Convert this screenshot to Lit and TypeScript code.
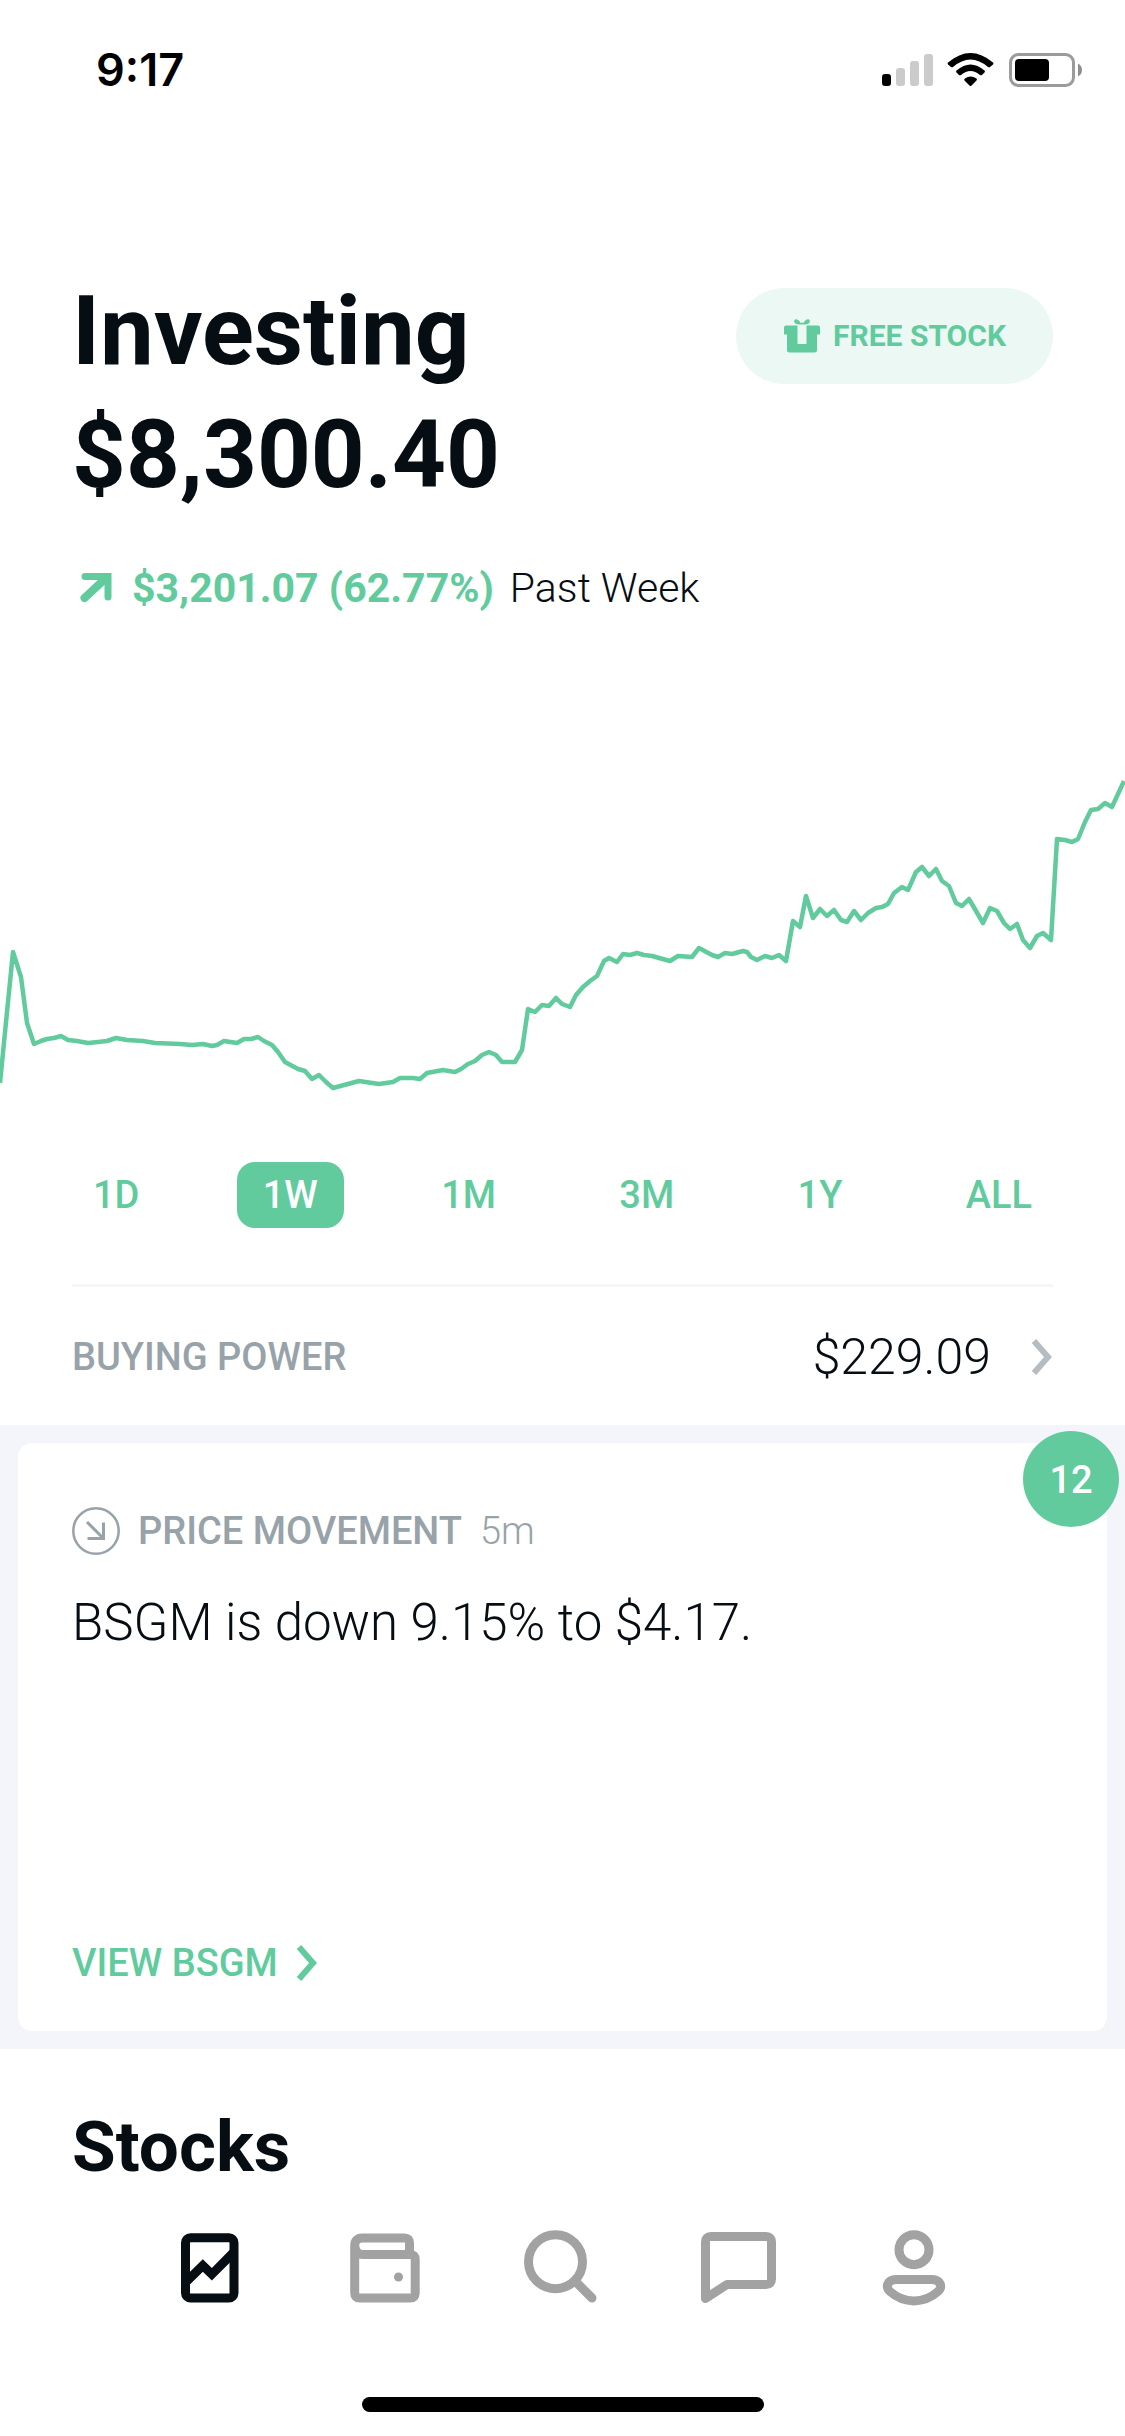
import { LitElement, html, css, svg } from "lit";
import { customElement, state } from "lit/decorators.js";
import { classMap } from "lit/directives/class-map.js";

const CHART_POINTS: [number, number][] = [
  [0, 1083], [7, 1012], [13, 952], [21, 977], [27, 1023], [34, 1044], [41, 1041], [47, 1039], [54, 1038], [61, 1036],
  [68, 1040], [77, 1041], [88, 1043], [98, 1042], [107, 1041], [116, 1038], [127, 1040], [143, 1041], [155, 1043],
  [180, 1044], [192, 1045], [203, 1044], [212, 1046], [217, 1045], [224, 1041], [237, 1043], [244, 1039], [251, 1039],
  [258, 1037], [264, 1041], [272, 1045], [278, 1052], [285, 1062], [298, 1069], [305, 1071], [312, 1079], [319, 1075],
  [326, 1082], [333, 1088], [359, 1081], [379, 1084], [393, 1082], [400, 1078], [413, 1078], [420, 1079], [427, 1073],
  [443, 1070], [455, 1072], [461, 1069], [468, 1064], [475, 1061], [482, 1055], [489, 1052], [496, 1055], [502, 1062],
  [515, 1062], [522, 1050], [528, 1009], [535, 1012], [542, 1005], [549, 1006], [556, 998], [562, 1004], [570, 1007],
  [576, 995], [583, 987], [590, 981], [597, 976], [604, 961], [609, 958], [617, 962], [623, 954], [630, 955],
  [637, 953], [644, 955], [652, 956], [670, 961], [678, 956], [692, 957], [699, 948], [712, 955], [718, 957],
  [725, 953], [732, 954], [743, 951], [747, 952], [751, 957], [757, 960], [765, 956], [772, 958], [779, 955],
  [786, 961], [793, 921], [800, 927], [806, 896], [813, 918], [820, 909], [827, 916], [834, 910], [841, 920],
  [847, 922], [854, 911], [861, 920], [868, 913], [876, 908], [882, 907], [888, 904], [894, 893], [902, 887],
  [908, 890], [916, 872], [922, 867], [929, 876], [936, 869], [942, 881], [949, 886], [956, 903], [962, 906],
  [969, 899], [983, 923], [990, 908], [997, 911], [1004, 923], [1010, 929], [1017, 924], [1023, 940], [1030, 948],
  [1037, 936], [1043, 933], [1051, 940], [1057, 839], [1065, 840], [1072, 842], [1078, 839], [1085, 822],
  [1091, 810], [1098, 809], [1105, 803], [1112, 807], [1124, 781],
];

const RANGES = ["1D", "1W", "1M", "3M", "1Y", "ALL"];

const chevron = html`<svg class="chevron" viewBox="0 0 22 38" aria-hidden="true">
  <path d="M3 3 L17 19 L3 35" fill="none" stroke="currentColor" stroke-width="6" />
</svg>`;

const TABS = [
  {
    label: "Portfolio",
    icon: svg`<rect x="10.500" y="11.700" width="48.500" height="60.300" rx="5" />
      <path d="M11 56 L27.800 39.600 L36.800 48.300 L58 27" />`,
  },
  {
    label: "Cash",
    icon: svg`<path d="M59.500 28.500 V17 Q59.500 12 54.500 12 H12.500 Q4.700 12 4.700 20 V67 Q4.700 72 9.700 72 H60.200 Q65.200 72 65.200 67 V33.500 Q65.200 28.500 60.200 28.500 H13 Q6 28.500 5 21" />
      <circle class="solid" cx="48.500" cy="51" r="4.500" />`,
  },
  {
    label: "Search",
    icon: svg`<circle cx="29.500" cy="35.700" r="27" /><path d="M49 55 L66 72" />`,
  },
  {
    label: "Messages",
    icon: svg`<path d="M10 10.500 H65 Q70.500 10.500 70.500 16 V53 Q70.500 58.500 65 58.500 H26 L4.500 72.500 V16 Q4.500 10.500 10 10.500 Z" />`,
  },
  {
    label: "Account",
    icon: svg`<circle cx="38" cy="23.700" r="15" />
      <path d="M20 53.500 H56 C64 53.500 67.500 61 62 65.500 C48 78 28 78 14 65.500 C8.500 61 12 53.500 20 53.500 Z" />`,
  },
];

@customElement("app-root")
export class AppRoot extends LitElement {
  @state() private range = "1W";
  @state() private tab = "Portfolio";

  static styles = css`
    :host {
      display: flex;
      flex-direction: column;
      min-height: 100vh;
      background: #fff;
      color: #060d13;
      font-family: Roboto, "Liberation Sans", sans-serif;
      font-size: 38px;
      line-height: 48px;
    }
    * { box-sizing: border-box; }
    svg { display: block; flex: none; overflow: visible; }
    button {
      font: inherit;
      color: inherit;
      border: 0;
      padding: 0;
      background: none;
      cursor: pointer;
    }
    a { color: inherit; text-decoration: none; }
    h1, h2, p { margin: 0; }

    .status {
      display: flex;
      align-items: center;
      justify-content: space-between;
      padding: 44px 40px 0 96px;
      color: #000;
    }
    .clock {
      font-family: Inter, sans-serif;
      font-size: 45px;
      line-height: 52px;
      font-weight: 600;
    }
    .indicators { width: 204px; height: 36px; }

    .summary {
      display: flex;
      justify-content: space-between;
      align-items: flex-start;
      padding: 173px 72px 0;
    }
    .title, .total {
      font-size: 96px;
      line-height: 124px;
      font-weight: 700;
    }
    .total { font-size: 94px; }
    .free {
      display: flex;
      align-items: center;
      gap: 12px;
      height: 96px;
      padding: 0 47px;
      margin-top: 19px;
      border-radius: 48px;
      background: #ebf8f4;
      color: #61cb9e;
      font-size: 30px;
      font-weight: 700;
    }
    .gift { width: 38px; height: 34px; }
    .change {
      display: flex;
      align-items: center;
      gap: 18px;
      padding: 47px 72px 0 78px;
      font-size: 41px;
      font-weight: 300;
    }
    .change strong { margin-right: 6px; color: #61cb9e; font-weight: 700; }
    .trend { width: 36px; height: 32px; color: #61cb9e; }

    .chart {
      width: 100%;
      height: 340px;
      margin-top: 158px;
    }

    .ranges {
      display: flex;
      justify-content: space-between;
      padding: 52px 67px 0;
    }
    .range {
      height: 66px;
      padding: 0 26px;
      border-radius: 18px;
      color: #61cb9e;
      font-weight: 500;
    }
    .range.on { background: #61cb9e; color: #fff; }

    .power {
      display: flex;
      align-items: center;
      height: 141px;
      padding-top: 2px;
      margin: 56px 72px 0;
      border-top: 3px solid #f5f6f8;
      text-align: left;
    }
    .power-label {
      flex: 1;
      color: #98a2a9;
      font-weight: 500;
    }
    .power-value {
      font-size: 50px;
      font-weight: 300;
    }
    .chevron { width: 22px; height: 38px; }
    .power .chevron { margin-left: 40px; color: #b6bdc0; }

    .feed {
      position: relative;
      padding: 18px;
      background: #f4f5fa;
    }
    .card {
      display: flex;
      flex-direction: column;
      height: 588px;
      padding: 64px 54px 44px;
      border-radius: 14px;
      background: #fff;
    }
    .card-head {
      display: flex;
      align-items: center;
      color: #98a2a9;
      font-weight: 300;
    }
    .card-head svg { width: 48px; height: 48px; margin-right: 18px; }
    .card-head strong { font-weight: 500; margin-right: 18px; }
    .card-text {
      margin-top: 38px;
      font-size: 51px;
      line-height: 60px;
      font-weight: 300;
    }
    .view {
      display: flex;
      align-items: center;
      gap: 18px;
      margin-top: auto;
      color: #61cb9e;
      font-weight: 500;
    }
    .count {
      position: absolute;
      top: 6px;
      right: 6px;
      width: 96px;
      height: 96px;
      border-radius: 50%;
      background: #61cb9e;
      color: #fff;
      font-weight: 500;
      line-height: 98px;
      text-align: center;
    }

    .stocks {
      padding: 54px 72px 0;
      font-size: 71px;
      line-height: 88px;
      font-weight: 700;
    }

    .tabs {
      display: flex;
      justify-content: space-between;
      padding: 35px 165px 0 175px;
    }
    .tab { color: #a2a2a2; }
    .tab.on { color: #060d13; }
    .tab svg {
      width: 84px;
      height: 84px;
      fill: none;
      stroke: currentColor;
      stroke-width: 9;
      stroke-linecap: round;
      stroke-linejoin: round;
    }
    .tab.on svg { stroke-linejoin: miter; stroke-linecap: butt; }
    .tab .solid { fill: currentColor; stroke: none; }

    .home {
      align-self: center;
      width: 402px;
      height: 15px;
      margin: auto 0 24px;
      border-radius: 8px;
      background: #000;
    }
  `;

  render() {
    const points = CHART_POINTS.map(([x, y]) => `${x},${y - 770}`).join(" ");
    return html`
      <header class="status">
        <span class="clock">9:17</span>
        <svg class="indicators" viewBox="0 0 204 36" aria-hidden="true">
          <rect x="1" y="22" width="9" height="12" rx="3" />
          <g fill="#cbcbcb">
            <rect x="15" y="16" width="9" height="18" rx="3" />
            <rect x="29" y="9" width="9" height="25" rx="3" />
            <rect x="43" y="2" width="9" height="32" rx="3" />
          </g>
          <path d="M67 10.500 Q89.500 -8.500 112 10.500 Q113 11.500 112 12.500 L109 15 Q108 15.500 107 15 Q89.500 0 72 15 Q71 15.500 70 15 L67 12.500 Q66 11.500 67 10.500 Z" />
          <path d="M75.500 18.500 Q89.500 6.500 103.500 18.500 Q104.500 19.500 103.500 20.500 L101 23 Q100 23.500 99 23 Q89.500 15 80 23 Q79 23.500 78 23 L75.500 20.500 Q74.500 19.500 75.500 18.500 Z" />
          <path d="M84 26.500 Q89.500 22.500 95.500 26.500 Q96.500 27.500 95.500 28.500 L90.500 33.500 Q89.500 34.500 88.500 33.500 L83.500 28.500 Q82.500 27.500 84 26.500 Z" />
          <rect x="129.500" y="2.500" width="63" height="31" rx="8" fill="none" stroke="#9b9b9b" stroke-width="3" />
          <rect x="134" y="7" width="34" height="22" rx="4" />
          <path d="M197 11.500 Q201 13.500 201 18 Q201 22.500 197 24.500 Z" fill="#8f8f8f" />
        </svg>
      </header>

      <section class="summary">
        <div>
          <h1 class="title">Investing</h1>
          <p class="total">$8,300.40</p>
        </div>
        <button class="free">
          <svg class="gift" viewBox="0 0 38 34" fill="currentColor" aria-hidden="true">
            <path d="M3 6.500 H14.500 V25 H23.500 V6.500 H35 Q37 6.500 37 8.500 V15.500 H34 V31 Q34 33.500 31.500 33.500 H6.500 Q4 33.500 4 31 V15.500 H1 V8.500 Q1 6.500 3 6.500 Z" />
            <path d="M17.500 4 Q19 3.200 20.500 4 Q22.500 0 25.500 0.300 Q28 1.500 26 4.300 Q23.500 6 20.500 5.500 H17.500 Q14.500 6 12 4.300 Q10 1.500 12.500 0.300 Q15.500 0 17.500 4 Z" />
          </svg>
          FREE STOCK
        </button>
      </section>

      <p class="change">
        <svg class="trend" viewBox="0 0 36 32" fill="none" stroke="currentColor" stroke-width="7" stroke-linecap="round" aria-hidden="true">
          <path d="M7 4.500 H30 V25" />
          <path d="M6.500 26 L28 6" stroke-width="8" />
        </svg>
        <span><strong>$3,201.07 (62.77%)</strong> Past Week</span>
      </p>

      <svg class="chart" viewBox="0 0 1125 340" preserveAspectRatio="none" role="img" aria-label="Portfolio value, past week">
        <polyline points=${points} fill="none" stroke="#61cb9e" stroke-width="4.500" stroke-linejoin="round" />
      </svg>

      <nav class="ranges">
        ${RANGES.map(
          (r) => html`<button
            class=${classMap({ range: true, on: r === this.range })}
            aria-pressed=${r === this.range}
            @click=${() => (this.range = r)}
          >${r}</button>`,
        )}
      </nav>

      <button class="power">
        <span class="power-label">BUYING POWER</span>
        <span class="power-value">$229.09</span>
        ${chevron}
      </button>

      <section class="feed">
        <article class="card">
          <div class="card-head">
            <svg viewBox="0 0 48 48" fill="none" stroke="currentColor" stroke-width="2.500" aria-hidden="true">
              <circle cx="24" cy="24" r="22.700" />
              <path d="M15 15 L31 31 M15.500 31.500 H31.500 V15.500" stroke-width="3" />
            </svg>
            <strong>PRICE MOVEMENT</strong>
            <span>5m</span>
          </div>
          <p class="card-text">BSGM is down 9.15% to $4.17.</p>
          <a class="view" href="#bsgm">VIEW BSGM ${chevron}</a>
        </article>
        <span class="count">12</span>
      </section>

      <h2 class="stocks">Stocks</h2>

      <nav class="tabs">
        ${TABS.map(
          (t) => html`<button
            class=${classMap({ tab: true, on: t.label === this.tab })}
            aria-label=${t.label}
            @click=${() => (this.tab = t.label)}
          ><svg viewBox="0 0 84 84">${t.icon}</svg></button>`,
        )}
      </nav>
      <div class="home"></div>
    `;
  }
}
